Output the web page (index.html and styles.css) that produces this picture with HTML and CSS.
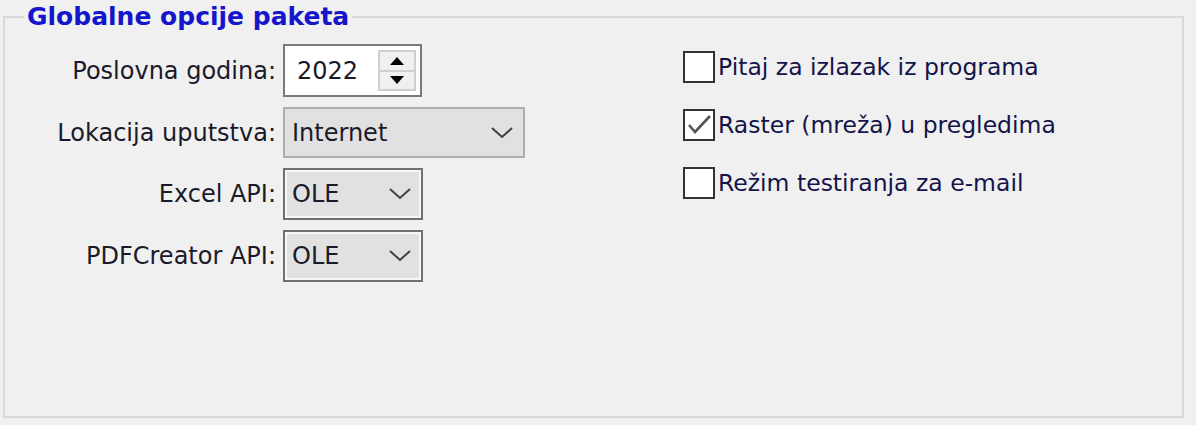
FILE: index.html
```html
<!DOCTYPE html>
<html lang="sr">
<head>
<meta charset="utf-8">
<title>Globalne opcije paketa</title>
<link rel="stylesheet" href="styles.css">
</head>
<body>
<fieldset class="group">
  <legend class="group-title">Globalne opcije paketa</legend>
  <div class="group-body">
    <div class="fields">
      <label class="field-label">Poslovna godina:</label>
      <div class="spin">
        <span class="spin-value">2022</span>
        <div class="spin-buttons">
          <span class="spin-btn"><svg width="14" height="8" viewBox="0 0 14 8"><polygon points="7,0 14,8 0,8" fill="#000"/></svg></span>
          <span class="spin-btn"><svg width="14" height="8" viewBox="0 0 14 8"><polygon points="0,0 14,0 7,8" fill="#000"/></svg></span>
        </div>
      </div>

      <label class="field-label">Lokacija uputstva:</label>
      <div class="combo combo-wide">
        <span class="combo-value">Internet</span>
        <svg class="chevron" width="22" height="12" viewBox="0 0 22 12"><polyline points="1,1 11,10 21,1" fill="none" stroke="#404040" stroke-width="2"/></svg>
      </div>

      <label class="field-label">Excel API:</label>
      <div class="combo combo-small">
        <span class="combo-value">OLE</span>
        <svg class="chevron" width="22" height="12" viewBox="0 0 22 12"><polyline points="1,1 11,10 21,1" fill="none" stroke="#404040" stroke-width="2"/></svg>
      </div>

      <label class="field-label">PDFCreator API:</label>
      <div class="combo combo-small">
        <span class="combo-value">OLE</span>
        <svg class="chevron" width="22" height="12" viewBox="0 0 22 12"><polyline points="1,1 11,10 21,1" fill="none" stroke="#404040" stroke-width="2"/></svg>
      </div>
    </div>

    <div class="checks">
      <div class="check-row">
        <span class="check-box"></span>
        <span class="check-text">Pitaj za izlazak iz programa</span>
      </div>
      <div class="check-row">
        <span class="check-box"><svg width="28" height="28" viewBox="0 0 28 28"><polyline points="4,14 10,21 25,5" fill="none" stroke="#555" stroke-width="2.6"/></svg></span>
        <span class="check-text">Raster (mreža) u pregledima</span>
      </div>
      <div class="check-row">
        <span class="check-box"></span>
        <span class="check-text">Režim testiranja za e-mail</span>
      </div>
    </div>
  </div>
</fieldset>
</body>
</html>
```

FILE: styles.css
```css
html, body {
  margin: 0;
  padding: 0;
  background: #f0f0f0;
}

body {
  font-family: "DejaVu Sans", sans-serif;
  font-size: 24px;
  color: #1a1a2a;
  width: 1196px;
  height: 425px;
  overflow: hidden;
}

.group {
  margin: 3px 0 0 3px;
  width: 1181px;
  height: 415px;
  box-sizing: border-box;
  border: 2px solid #d9d9d9;
  padding: 0;
}

.group-title {
  margin-left: 19px;
  padding: 0 3px;
  font-weight: bold;
  font-size: 25px;
  line-height: 28px;
  color: #1515cc;
}

.group-body {
  display: flex;
  padding-top: 13px;
}

.fields {
  width: 678px;
  display: grid;
  grid-template-columns: 271px auto;
  column-gap: 7px;
  row-gap: 10px;
  align-items: center;
  justify-items: start;
}

.field-label {
  justify-self: end;
  white-space: nowrap;
}

.spin {
  width: 139px;
  height: 53px;
  box-sizing: border-box;
  border: 2px solid #7a7a7a;
  background: #fff;
  display: flex;
  align-items: center;
  justify-content: space-between;
  padding: 0 4px 0 12px;
}

.spin-buttons {
  display: flex;
  flex-direction: column;
  width: 38px;
  height: 41px;
}

.spin-btn {
  flex: 1;
  display: flex;
  align-items: center;
  justify-content: center;
  background: #f0f0f0;
  border: 2px solid #cfcfcf;
}

.spin-btn + .spin-btn {
  border-top: none;
}

.combo {
  box-sizing: border-box;
  background: #e1e1e1;
  display: flex;
  align-items: center;
  justify-content: space-between;
}

.combo-wide {
  width: 242px;
  height: 51px;
  border: 2px solid #adadad;
  padding: 0 10px 0 7px;
}

.combo-small {
  width: 140px;
  height: 52px;
  border: 2px solid #707070;
  box-shadow: inset 0 0 0 2px #f7f7f7;
  padding: 0 10px 0 7px;
}

.chevron {
  display: block;
}

.checks {
  display: flex;
  flex-direction: column;
  gap: 26px;
  padding-top: 7px;
  color: #14144a;
  font-size: 23.5px;
}

.check-row {
  display: flex;
  align-items: center;
  height: 32px;
  gap: 3px;
}

.check-box {
  width: 32px;
  height: 32px;
  box-sizing: border-box;
  border: 2px solid #333;
  background: #fff;
  display: flex;
  align-items: center;
  justify-content: center;
}

.check-text {
  white-space: nowrap;
}
```
